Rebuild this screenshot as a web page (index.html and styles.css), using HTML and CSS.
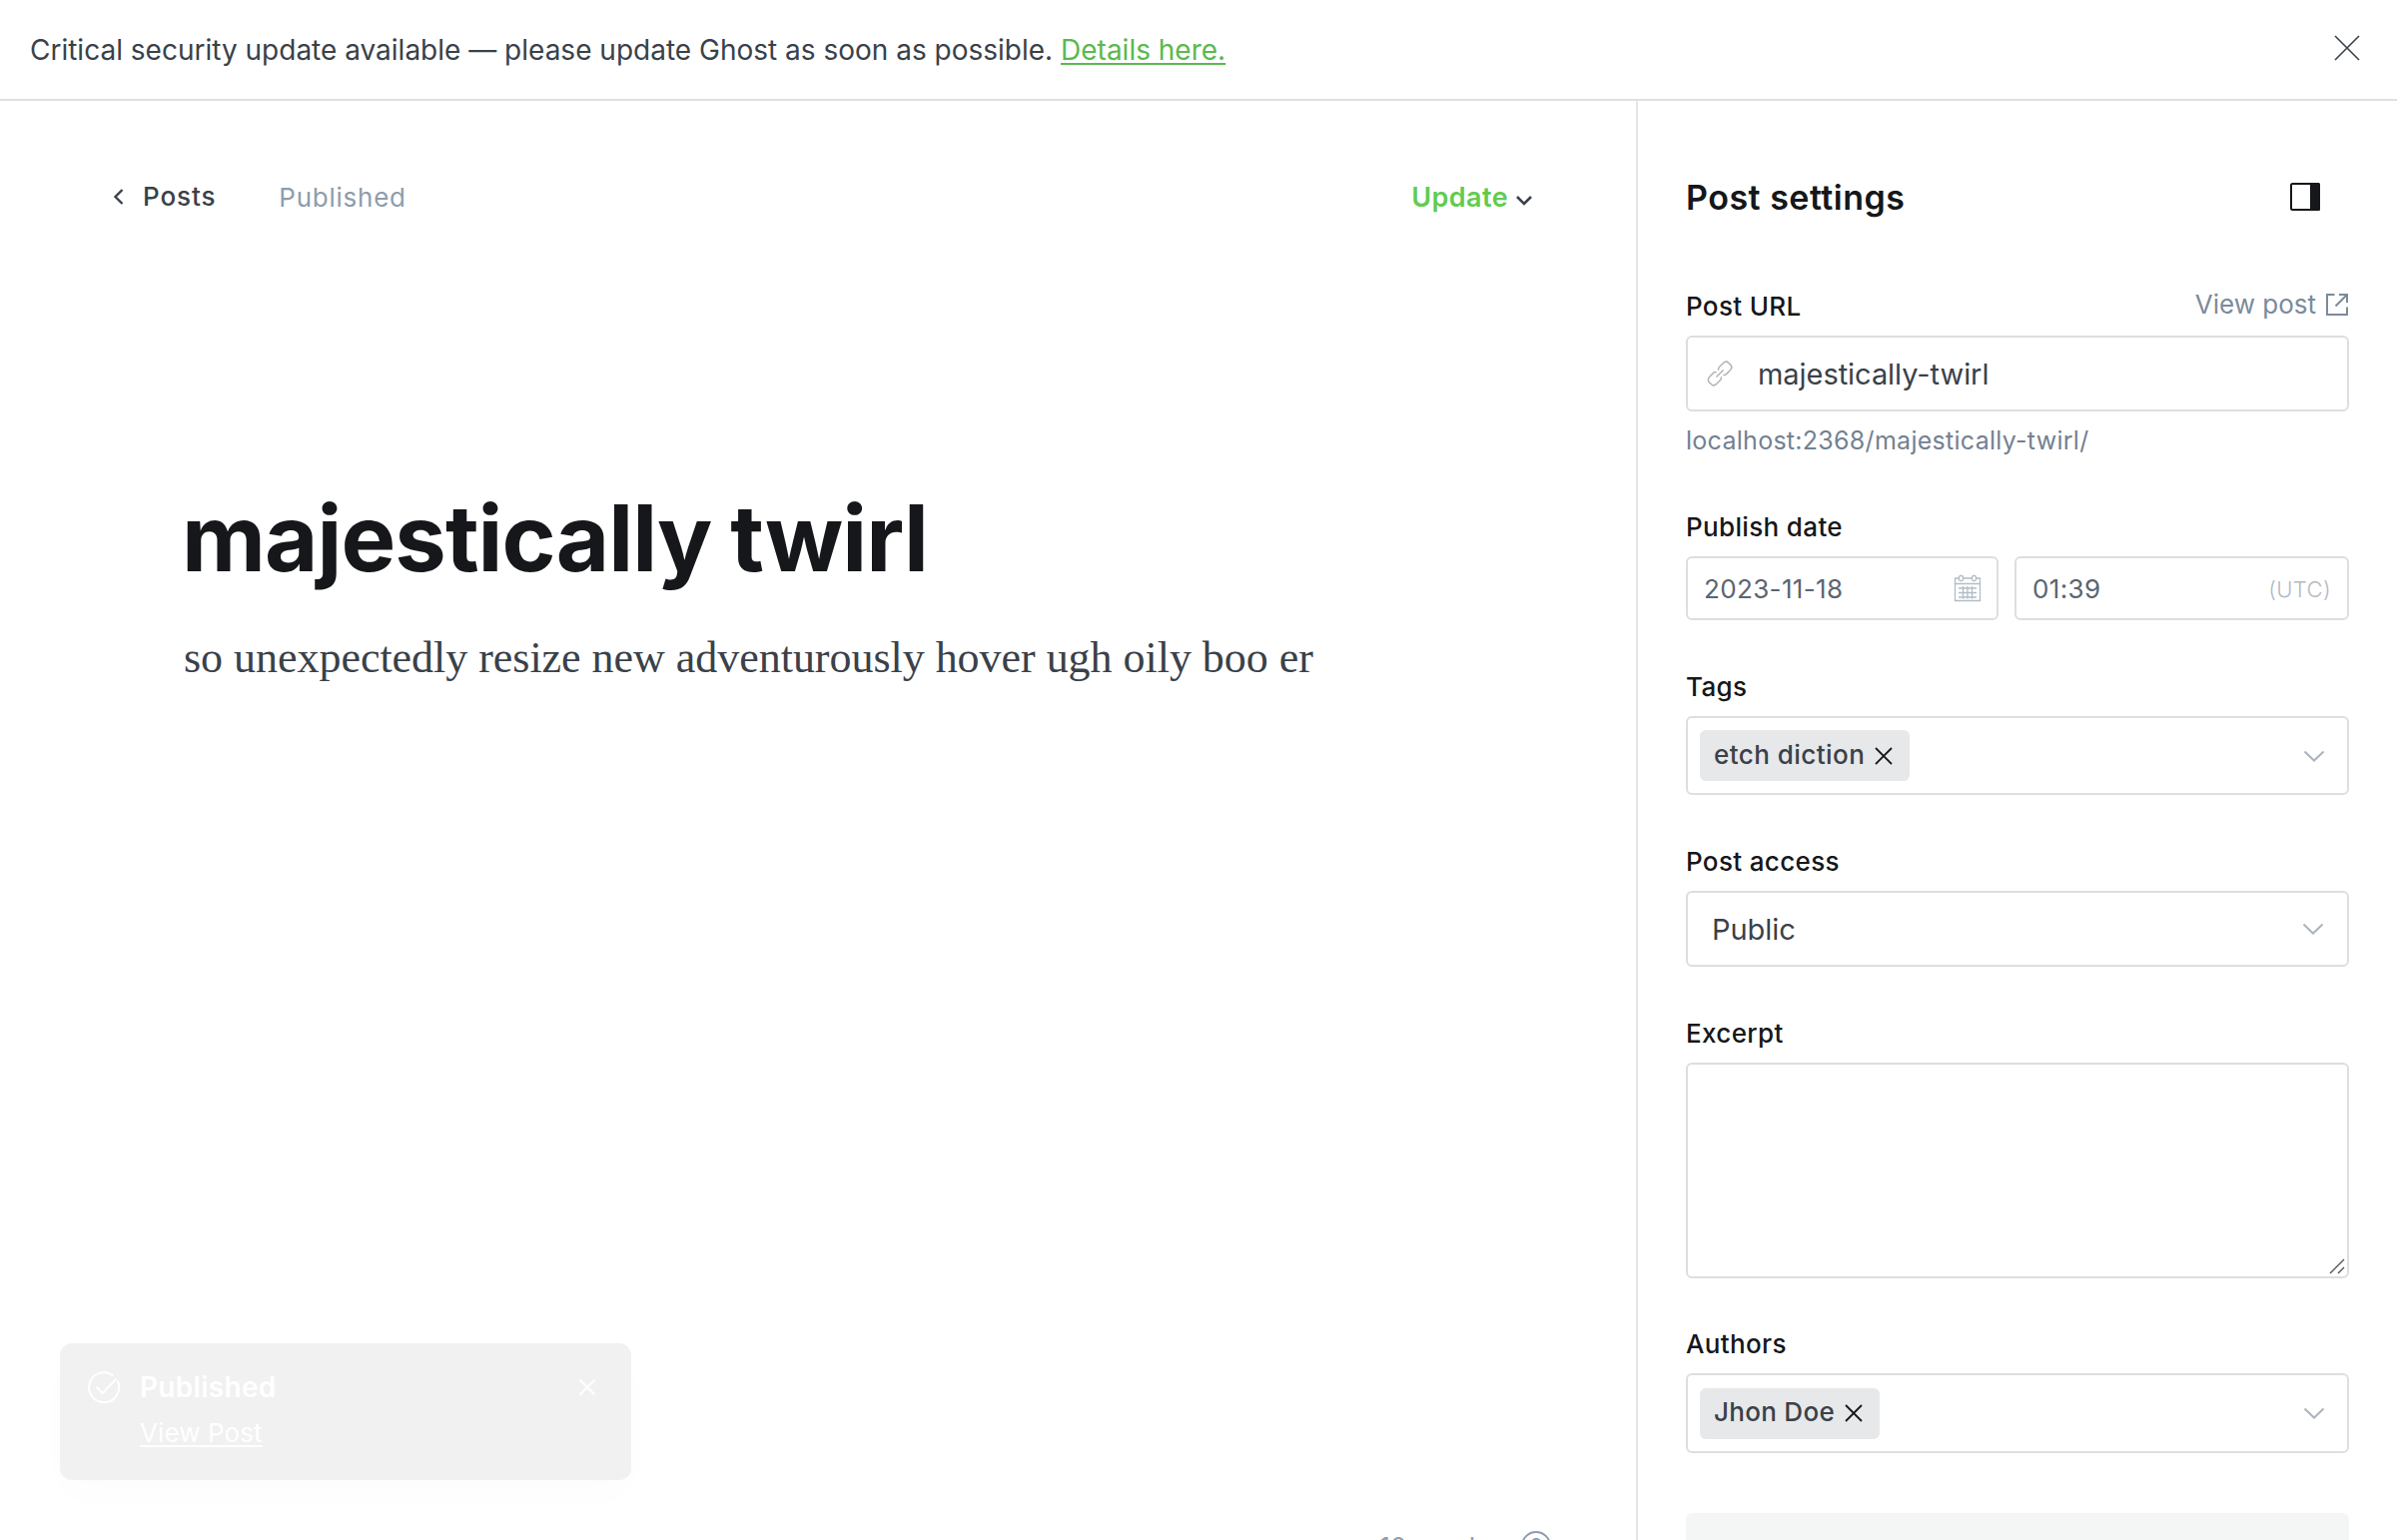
FILE: index.html
```html
<!DOCTYPE html>
<html lang="en">
<head>
<meta charset="utf-8">
<title>Post settings</title>
<link rel="stylesheet" href="styles.css">
</head>
<body>
<div class="app">
  <header class="banner">
    <p class="banner-text">Critical security update available — please update Ghost as soon as possible. <a class="banner-link" href="#">Details here.</a></p>
    <svg class="banner-close" viewBox="0 0 26 26"><path d="M1 1l24 24M25 1L1 25"/></svg>
  </header>
  <div class="body">
    <main class="editor">
      <nav class="toolbar">
        <svg class="back-icon" viewBox="0 0 12 18"><path d="M9.500 2L2.500 9l7 7"/></svg>
        <span class="back">Posts</span>
        <span class="status">Published</span>
        <span class="update">Update</span>
        <svg class="update-icon" viewBox="0 0 18 12"><path d="M2 2l7 7 7-7"/></svg>
      </nav>
      <article class="post">
        <h1 class="post-title">majestically twirl</h1>
        <p class="post-body">so unexpectedly resize new adventurously hover ugh oily boo er</p>
      </article>
      <footer class="word-count">
        <span>10 words</span>
        <span class="help">?</span>
      </footer>
      <aside class="toast">
        <svg class="toast-check" viewBox="0 0 34 34"><path d="M26.500 5.500A15 15 0 1 0 30.800 11"/><path d="M9.500 16.500l6 6.500 14-14.500"/></svg>
        <div class="toast-copy">
          <span class="toast-title">Published</span>
          <a class="toast-link" href="#">View Post</a>
        </div>
        <svg class="toast-close" viewBox="0 0 18 18"><path d="M1.500 1.500l15 15M16.500 1.500l-15 15"/></svg>
      </aside>
    </main>
    <section class="settings">
      <header class="settings-head">
        <h2 class="settings-title">Post settings</h2>
        <svg class="panel-icon" viewBox="0 0 30 28"><rect class="frame" x="1" y="1" width="28" height="26" rx="1.500"/><path class="pane" d="M20 0h8.500a1.500 1.500 0 0 1 1.500 1.500v25a1.500 1.500 0 0 1-1.500 1.500H20z"/></svg>
      </header>

      <div class="group">
        <div class="label-row">
          <span class="label">Post URL</span>
          <a class="view-post" href="#">View post
            <svg class="external" viewBox="0 0 24 24"><path d="M9.500 2H2v20h20v-7.500M14 2h8v8M22 2L10.500 13.500"/></svg>
          </a>
        </div>
        <div class="field field-url">
          <svg class="link-icon" viewBox="0 0 26 26"><g transform="rotate(-45 13 13)"><path d="M8 13h10M11.500 9.800C11 8.600 10 8 8.500 8H3.500C1 8-.7 9.500-.7 11.500v3C-.7 16.500 1 18 3.500 18h5c1.500 0 2.500-.6 3-1.800M14.500 9.800c.5-1.200 1.500-1.800 3-1.800h5c2.500 0 4.200 1.500 4.200 3.500v3c0 2-1.700 3.500-4.200 3.500h-5c-1.500 0-2.500-.6-3-1.800"/></g></svg>
          <span class="value">majestically-twirl</span>
        </div>
        <span class="hint">localhost:2368/majestically-twirl/</span>
      </div>

      <div class="group">
        <div class="label-row"><span class="label">Publish date</span></div>
        <div class="date-row">
          <div class="field field-date">
            <span class="small-value">2023-11-18</span>
            <svg class="calendar" viewBox="0 0 28 28"><path d="M5.500 4H1.500v22.500h25V4h-4M9.500 4h9M1.500 9.500h25M5 14h18M5 18.500h18M5 23h18M9.500 12v12.500M14 12v12.500M18.500 12v12.500"/><rect x="5.500" y="1.500" width="4" height="5" rx="1.500"/><rect x="18.500" y="1.500" width="4" height="5" rx="1.500"/></svg>
          </div>
          <div class="field field-time">
            <span class="small-value">01:39</span>
            <span class="utc">(UTC)</span>
          </div>
        </div>
      </div>

      <div class="group">
        <div class="label-row"><span class="label">Tags</span></div>
        <div class="field field-tags">
          <span class="chip"><span class="chip-text">etch diction</span><svg class="chip-x" viewBox="0 0 18 18"><path d="M1 1l16 16M17 1L1 17"/></svg></span>
          <svg class="chevron" viewBox="0 0 22 12"><path d="M1.500 1.500l9.500 9 9.500-9"/></svg>
        </div>
      </div>

      <div class="group">
        <div class="label-row"><span class="label">Post access</span></div>
        <div class="field field-access">
          <span class="value">Public</span>
          <svg class="chevron" viewBox="0 0 22 12"><path d="M1.500 1.500l9.500 9 9.500-9"/></svg>
        </div>
      </div>

      <div class="group group-excerpt">
        <div class="label-row"><span class="label">Excerpt</span></div>
        <div class="field field-excerpt">
          <svg class="grip" viewBox="0 0 16 16"><path d="M1 15L15 1M9 15l6-6"/></svg>
        </div>
      </div>

      <div class="group group-authors">
        <div class="label-row"><span class="label">Authors</span></div>
        <div class="field field-authors">
          <span class="chip"><span class="chip-text">Jhon Doe</span><svg class="chip-x" viewBox="0 0 18 18"><path d="M1 1l16 16M17 1L1 17"/></svg></span>
          <svg class="chevron" viewBox="0 0 22 12"><path d="M1.500 1.500l9.500 9 9.500-9"/></svg>
        </div>
      </div>

      <div class="menu">Meta data</div>
    </section>
  </div>
</div>
</body>
</html>
```
FILE: styles.css
```css
* { box-sizing: border-box; }

body {
  margin: 0;
  background: #fff;
  color: #3a4149;
  font-family: Inter, "Liberation Sans", sans-serif;
}

svg { display: block; flex: none; fill: none; stroke: currentColor; }
h1, h2, p { margin: 0; }

.app {
  display: flex;
  flex-direction: column;
  width: 2400px;
  height: 1542px;
  overflow: hidden;
}

/* Update banner */
.banner {
  display: flex;
  flex: none;
  align-items: flex-start;
  justify-content: space-between;
  height: 101px;
  padding: 35px 37px 0 30px;
  border-bottom: 2px solid #dfe1e0;
}
.banner-text { margin-top: -1px; font-size: 28px; line-height: 32px; white-space: nowrap; }
.banner-link { color: #5ab94f; text-underline-offset: 3px; text-decoration-thickness: 2px; }
.banner-close { width: 26px; height: 26px; stroke-width: 1.6; }

.body { display: flex; flex: 1; min-height: 0; }

/* Editor */
.editor { position: relative; display: flex; flex-direction: column; width: 1638px; height: 1441px; }
.toolbar {
  display: flex;
  align-items: center;
  height: 32px;
  margin: 80px 103px 0 113px;
  font-size: 26px;
  line-height: 32px;
}
.back-icon { width: 12px; height: 18px; stroke-width: 2.4; }
.back { margin-left: 18px; font-weight: 500; letter-spacing: 0.9px; }
.status { margin-left: 63px; padding-top: 2px; color: #8e9cac; font-size: 26px; letter-spacing: 0.75px; }
.update { margin-left: auto; padding-top: 2px; color: #5fcc4f; font-size: 27px; font-weight: 600; letter-spacing: 0.4px; }
.update-icon { width: 18px; height: 12px; margin: 7px 0 0 7px; stroke-width: 2.6; }

.post { margin: 271px 0 0 184px; white-space: nowrap; }
.post-title { margin-left: -2px; color: #15171a; font-size: 92px; font-weight: 700; line-height: 110px; letter-spacing: -0.95px; word-spacing: -2px; }
.post-body { margin-top: 35px; font-family: Georgia, "Liberation Serif", serif; font-size: 44px; line-height: 60px; letter-spacing: -0.03px; }

.word-count {
  display: flex;
  align-items: center;
  justify-content: flex-end;
  margin: auto 85px -23px 0;
  gap: 32px;
  color: #8e9cac;
  font-size: 26px;
  line-height: 32px;
}
.word-count span:first-child { padding-top: 2px; }
.help { width: 30px; height: 30px; border: 2px solid; border-radius: 50%; font-size: 22px; line-height: 27px; text-align: center; }

/* Toast notification */
.toast {
  position: absolute;
  left: 60px;
  top: 1244px;
  display: flex;
  align-items: flex-start;
  width: 572px;
  height: 137px;
  padding: 27px 35px 0 27px;
  border-radius: 12px;
  background: #f1f1f1;
  box-shadow: 0 16px 40px rgba(0, 0, 0, 0.012);
  color: #fff;
}
.toast-check { width: 34px; height: 34px; stroke-width: 2; }
.toast-copy { display: flex; flex-direction: column; align-items: flex-start; margin: 1px 0 0 19px; }
.toast-title { font-size: 28px; font-weight: 600; line-height: 32px; letter-spacing: 0.3px; }
.toast-link { margin-top: 14px; color: #fff; font-size: 26px; line-height: 32px; letter-spacing: 0.1px; text-underline-offset: 3px; text-decoration-thickness: 2px; }
.toast-close { width: 18px; height: 18px; margin: 8px 0 0 auto; stroke-width: 2; }

/* Settings panel */
.settings { width: 762px; padding: 0 48px; border-left: 2px solid #e5e7e7; }
.settings-head { display: flex; align-items: flex-start; justify-content: space-between; height: 189px; padding: 77px 29px 0 0; }
.settings-title { color: #15171a; font-size: 34px; font-weight: 600; line-height: 40px; letter-spacing: 0.5px; }
.panel-icon { width: 30px; height: 28px; margin-top: 5px; color: #15171a; }
.frame { stroke-width: 2; }
.pane { fill: currentColor; stroke: none; }

.group { margin-bottom: 50px; }
.group-excerpt { margin-bottom: 49px; }
.group-authors { margin-bottom: 60px; }
.label-row { display: flex; justify-content: space-between; height: 46px; padding-top: 1px; font-size: 26px; line-height: 32px; }
.label { color: #15171a; font-weight: 500; letter-spacing: 0.35px; }
.view-post { display: flex; height: 32px; gap: 9px; margin-top: -2px; color: #7c8b9a; text-decoration: none; }
.external { width: 24px; height: 24px; margin-top: 4px; stroke-width: 2; }

.field { position: relative; display: flex; align-items: center; border: 2px solid #dddedf; border-radius: 6px; line-height: 32px; }
.field-url { height: 76px; padding-left: 19px; }
.field-access { height: 76px; padding: 0 23px 0 24px; }
.link-icon { width: 26px; height: 26px; stroke-width: 1.5; color: #b4b4b4; }
.value { padding-top: 2px; font-size: 29px; letter-spacing: -0.05px; }
.field-url .value { margin-left: 25px; }
.hint { display: block; height: 38px; padding-top: 13px; margin-bottom: 61px; color: #738192; font-size: 25px; line-height: 32px; letter-spacing: 0.28px; }

.date-row { display: flex; gap: 16px; }
.field-date { width: 313px; height: 64px; padding: 0 15px 0 16px; justify-content: space-between; }
.field-time { flex: 1; height: 64px; padding: 0 16px; justify-content: space-between; }
.small-value { padding-top: 2px; color: #5a6571; font-size: 26px; letter-spacing: 0.35px; }
.calendar { width: 28px; height: 28px; stroke-width: 1.3; color: #b3bcc6; }
.utc { padding-top: 1px; color: #b3bac4; font-size: 22px; font-weight: 300; letter-spacing: 0.4px; }

.field-tags { height: 79px; padding: 0 22px 0 12px; justify-content: space-between; }
.field-authors { height: 80px; padding: 0 22px 0 12px; justify-content: space-between; }
.field-access { justify-content: space-between; }
.chip { display: flex; align-items: center; gap: 10px; height: 51px; padding: 0 17px 0 14px; border-radius: 6px; background: #e6e8ea; font-size: 26px; font-weight: 500; }
.chip-text { padding-bottom: 2px; letter-spacing: 0.45px; }
.field-authors .chip-text { letter-spacing: 0.3px; }
.chip-x { width: 18px; height: 18px; color: #15171a; stroke-width: 1.8; }
.chevron { width: 22px; height: 12px; stroke-width: 2; color: #abb4be; }
.field-excerpt { height: 216px; }
.grip { position: absolute; right: 2px; bottom: 2px; width: 16px; height: 16px; stroke-width: 1.4; color: #555; }

.menu { height: 80px; padding: 21px 28px; border-radius: 6px; background: #f4f6f6; color: #15171a; font-size: 26px; font-weight: 500; line-height: 32px; letter-spacing: 0.2px; }
```
